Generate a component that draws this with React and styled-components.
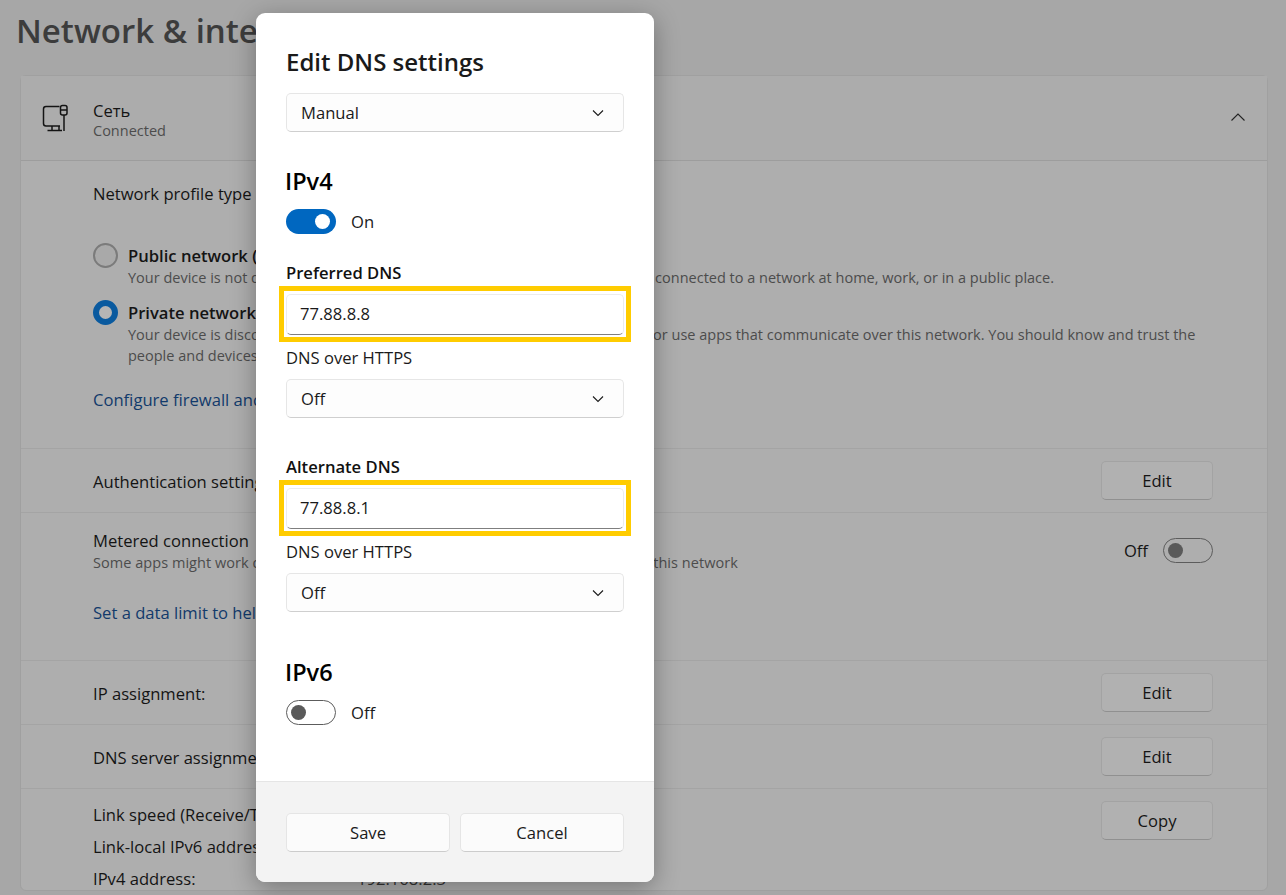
import React from "react";
import styled, { createGlobalStyle } from "styled-components";

const GlobalStyle = createGlobalStyle`
  html, body {
    margin: 0;
    padding: 0;
    height: 100%;
    overflow: hidden;
  }
  * {
    box-sizing: border-box;
  }
`;

function Chevron({ up }) {
  return (
    <svg width="14" height="14" viewBox="0 0 14 14" fill="none">
      <path d={up ? "M0.5 10.5 L7 4 L13.5 10.5" : "M2 4.5 L7 9.5 L12 4.5"} stroke="currentColor" strokeWidth="1.1" />
    </svg>
  );
}

function NetworkIcon() {
  return (
    <svg width="28" height="28" viewBox="0 0 28 28" fill="none" stroke="#141414" strokeWidth="1.5">
      <path d="M17.5 2.5 H4 Q1.5 2.5 1.5 5 V19.5 Q1.5 22 4 22 H18" />
      <path d="M5.5 26.5 H20 M10 22 V26.5 M17 22 V26.5" />
      <rect x="18.5" y="1.5" width="6.5" height="9.5" rx="2" />
      <path d="M18.5 6 H25 M22 11 V27" />
    </svg>
  );
}

function App() {
  return (
    <>
      <GlobalStyle />
      <Page>
        <Title>Network &amp; internet</Title>
        <Card>
          <CardHeader>
            <NetworkIcon />
            <HeaderText>
              <Primary>Сеть</Primary>
              <HeaderStatus>Connected</HeaderStatus>
            </HeaderText>
            <HeaderChevron>
              <Chevron up />
            </HeaderChevron>
          </CardHeader>
          <ProfileSection>
            <Primary>Network profile type</Primary>
            <RadioRow $first>
              <Radio />
              <RadioText>
                <RadioTitle>Public network (Recommended)</RadioTitle>
                <Secondary>
                  Your device is not discoverable on the network. Use this in most cases—when connected to a network at home, work, or in a public place.
                </Secondary>
              </RadioText>
            </RadioRow>
            <RadioRow>
              <Radio $checked />
              <RadioText>
                <RadioTitle>Private network</RadioTitle>
                <Secondary>
                  Your device is discoverable on the network. Select this if you need file sharing or use apps that communicate over this network. You should know and trust the people and devices on the network.
                </Secondary>
              </RadioText>
            </RadioRow>
            <SectionLink>Configure firewall and security settings</SectionLink>
          </ProfileSection>
          <Row>
            <RowLabel>Authentication settings</RowLabel>
            <GhostButton>Edit</GhostButton>
          </Row>
          <MeteredSection>
            <MeteredTop>
              <div>
                <Primary>Metered connection</Primary>
                <MeteredNote>
                  Some apps might work differently to reduce data usage when you're connected to this network
                </MeteredNote>
              </div>
              <BackToggle>
                <Primary>Off</Primary>
                <Toggle />
              </BackToggle>
            </MeteredTop>
            <DataLimitLink>Set a data limit to help control data usage on this network</DataLimitLink>
          </MeteredSection>
          <Row>
            <RowLabel>IP assignment:</RowLabel>
            <GhostButton>Edit</GhostButton>
          </Row>
          <Row>
            <RowLabel>DNS server assignment:</RowLabel>
            <GhostButton>Edit</GhostButton>
          </Row>
          <DetailsRow>
            <DetailsGrid>
              <Primary>Link speed (Receive/Transmit):</Primary>
              <Value>1000/1000 (Mbps)</Value>
              <Primary>Link-local IPv6 address:</Primary>
              <Value>fe80::1</Value>
              <Primary>IPv4 address:</Primary>
              <Value>192.168.2.3</Value>
            </DetailsGrid>
            <CopyButton>Copy</CopyButton>
          </DetailsRow>
        </Card>
      </Page>

      <Dialog>
        <DialogBody>
          <DialogTitle>Edit DNS settings</DialogTitle>
          <Select>
            Manual
            <Chevron />
          </Select>

          <GroupTitle>IPv4</GroupTitle>
          <ToggleLine>
            <Toggle $on />
            On
          </ToggleLine>

          <FieldLabel>Preferred DNS</FieldLabel>
          <Highlight>
            <TextInput>77.88.8.8</TextInput>
          </Highlight>
          <PlainLabel>DNS over HTTPS</PlainLabel>
          <Select>
            Off
            <Chevron />
          </Select>

          <FieldLabel $spaced>Alternate DNS</FieldLabel>
          <Highlight>
            <TextInput>77.88.8.1</TextInput>
          </Highlight>
          <PlainLabel>DNS over HTTPS</PlainLabel>
          <Select>
            Off
            <Chevron />
          </Select>

          <GroupTitle $second>IPv6</GroupTitle>
          <ToggleLine $second>
            <Toggle />
            Off
          </ToggleLine>
        </DialogBody>
        <DialogFooter>
          <FooterButton>Save</FooterButton>
          <FooterButton>Cancel</FooterButton>
        </DialogFooter>
      </Dialog>
    </>
  );
}

export default App;

const font = `"Open Sans", "Noto Sans", sans-serif`;

const Page = styled.div`
  width: 1286px;
  height: 895px;
  overflow: hidden;
  background: #a7a7a7;
  padding: 0 18px 0 20px;
  font-family: ${font};
  color: #141414;
`;
const Title = styled.h1`
  margin: 0 0 0 -4px;
  height: 75px;
  padding-top: 9px;
  font-size: 33px;
  line-height: 44px;
  font-weight: 600;
  color: #3c3c3c;
  white-space: nowrap;
`;
const Card = styled.div`
  border: 1px solid #a0a0a0;
  border-radius: 6px;
  background: #aeaeae;
`;
const CardHeader = styled.div`
  display: flex;
  align-items: center;
  height: 85px;
  padding: 0 21px;
  border-bottom: 1px solid #9d9d9d;
  background: #acacac;
`;
const HeaderText = styled.div`
  margin: 3px 0 0 23px;
`;
const HeaderChevron = styled.div`
  display: flex;
  margin: -2px 1px 0 auto;
  color: #222;
`;
const Primary = styled.div`
  font-size: 16.6px;
  line-height: 22px;
  white-space: nowrap;
`;
const Secondary = styled.div`
  font-size: 14.5px;
  line-height: 21px;
  color: #4c4c4c;
`;
const HeaderStatus = styled(Secondary)`
  line-height: 18px;
`;
const MeteredNote = styled(Secondary)`
  letter-spacing: 0.045px;
`;
const ProfileSection = styled.div`
  height: 288px;
  padding: 22px 50px 0 72px;
  border-bottom: 1px solid #a4a4a4;
`;
const RadioRow = styled.div`
  display: flex;
  gap: 10px;
  margin-top: ${(p) => (p.$first ? "40px" : "14px")};
`;
const Radio = styled.div`
  flex: none;
  width: 25px;
  height: 25px;
  border-radius: 50%;
  margin-top: -2px;
  background: ${(p) => (p.$checked ? "#b5b5b5" : "#a9a9a9")};
  border: ${(p) => (p.$checked ? "6px solid #0a5a9f" : "2px solid #7b7b7b")};
`;
const RadioText = styled.div`
  min-width: 0;
`;
const RadioTitle = styled(Primary)`
  font-weight: 600;
`;
const SectionLink = styled.div`
  margin-top: 23px;
  font-size: 16.6px;
  line-height: 22px;
  color: #123a6b;
`;
const DataLimitLink = styled(SectionLink)`
  margin-top: 29px;
`;
const Row = styled.div`
  display: flex;
  align-items: center;
  justify-content: space-between;
  height: 64px;
  padding: 0 54px 0 72px;
  border-bottom: 1px solid #a4a4a4;
`;
const RowLabel = styled(Primary)`
  padding-top: 2px;
`;
const GhostButton = styled.div`
  flex: none;
  display: flex;
  align-items: center;
  justify-content: center;
  width: 112px;
  height: 39px;
  margin-top: -1px;
  border: 1px solid #a3a3a3;
  border-bottom-color: #909090;
  border-radius: 5px;
  background: #b1b1b1;
  font-size: 16.6px;
`;
const CopyButton = styled(GhostButton)`
  margin-top: 0;
`;
const MeteredSection = styled.div`
  height: 148px;
  padding: 17px 54px 0 72px;
  border-bottom: 1px solid #a4a4a4;
`;
const MeteredTop = styled.div`
  display: flex;
  justify-content: space-between;
`;
const BackToggle = styled.div`
  display: flex;
  align-items: center;
  gap: 15px;
  height: 39px;
  margin-top: 1px;
`;
const DetailsRow = styled.div`
  display: flex;
  align-items: flex-start;
  justify-content: space-between;
  padding: 12px 54px 0 72px;
`;
const DetailsGrid = styled.div`
  display: grid;
  grid-template-columns: 264px auto;
  row-gap: 10px;
  margin-top: 3px;
`;
const Value = styled(Primary)`
  color: #333;
`;

const Dialog = styled.div`
  position: absolute;
  left: 256px;
  top: 13px;
  width: 398px;
  height: 869px;
  display: flex;
  flex-direction: column;
  border-radius: 9px;
  overflow: hidden;
  background: #fff;
  box-shadow: 0 6px 26px rgba(0, 0, 0, 0.32);
  font-family: ${font};
  color: #1a1a1a;
`;
const DialogBody = styled.div`
  flex: 1;
  padding: 30px 30px 0;
`;
const DialogTitle = styled.h2`
  margin: 0 0 18px;
  height: 32px;
  font-size: 24px;
  line-height: 38px;
  font-weight: 600;
  white-space: nowrap;
`;
const Select = styled.div`
  display: flex;
  align-items: center;
  justify-content: space-between;
  height: 39px;
  padding: 0 18px 0 14px;
  border: 1px solid #e6e6e6;
  border-bottom-color: #cfcfcf;
  border-radius: 5px;
  background: #fdfdfd;
  font-size: 16.6px;
`;
const GroupTitle = styled.div`
  margin: ${(p) => (p.$second ? "42px" : "31px")} 0 0 -1px;
  font-size: 23.5px;
  line-height: 36px;
  font-weight: 600;
  color: #000;
`;
const ToggleLine = styled.div`
  display: flex;
  align-items: center;
  gap: 15px;
  height: 25px;
  margin-top: 10px;
  font-size: 16.6px;
`;
const Toggle = styled.div`
  position: relative;
  flex: none;
  width: 50px;
  height: 25px;
  border-radius: 13px;
  background: ${(p) => (p.$on ? "#0067c0" : "transparent")};
  border: ${(p) => (p.$on ? "none" : "1px solid #5c5c5c")};
  &::after {
    content: "";
    position: absolute;
    top: ${(p) => (p.$on ? "5px" : "4px")};
    ${(p) => (p.$on ? "right: 6px;" : "left: 4px;")}
    width: 15px;
    height: 15px;
    border-radius: 50%;
    background: ${(p) => (p.$on ? "#fff" : "#5a5a5a")};
  }
`;
const FieldLabel = styled.div`
  margin-top: ${(p) => (p.$spaced ? "37px" : "27px")};
  font-size: 16.6px;
  line-height: 24px;
  font-weight: 600;
  color: #111;
`;
const Highlight = styled.div`
  margin: 1px -7px 0;
  padding: 3px 2px 2px;
  border: 5px solid #ffcc00;
`;
const TextInput = styled.div`
  display: flex;
  align-items: center;
  height: 41px;
  padding: 0 13px 2px;
  border: 1px solid #ececec;
  border-bottom: 1px solid #7f7f7f;
  border-radius: 5px;
  font-size: 16.6px;
`;
const PlainLabel = styled.div`
  margin: 4px 0 9px;
  font-size: 16.6px;
  line-height: 24px;
`;
const DialogFooter = styled.div`
  flex: none;
  display: flex;
  gap: 10px;
  height: 101px;
  padding: 31px 30px 0;
  background: #f3f3f3;
  border-top: 1px solid #e5e5e5;
`;
const FooterButton = styled.div`
  flex: 1;
  display: flex;
  align-items: center;
  justify-content: center;
  height: 39px;
  border: 1px solid #e5e5e5;
  border-bottom-color: #cccccc;
  border-radius: 5px;
  background: #fbfbfb;
  font-size: 16.6px;
`;
